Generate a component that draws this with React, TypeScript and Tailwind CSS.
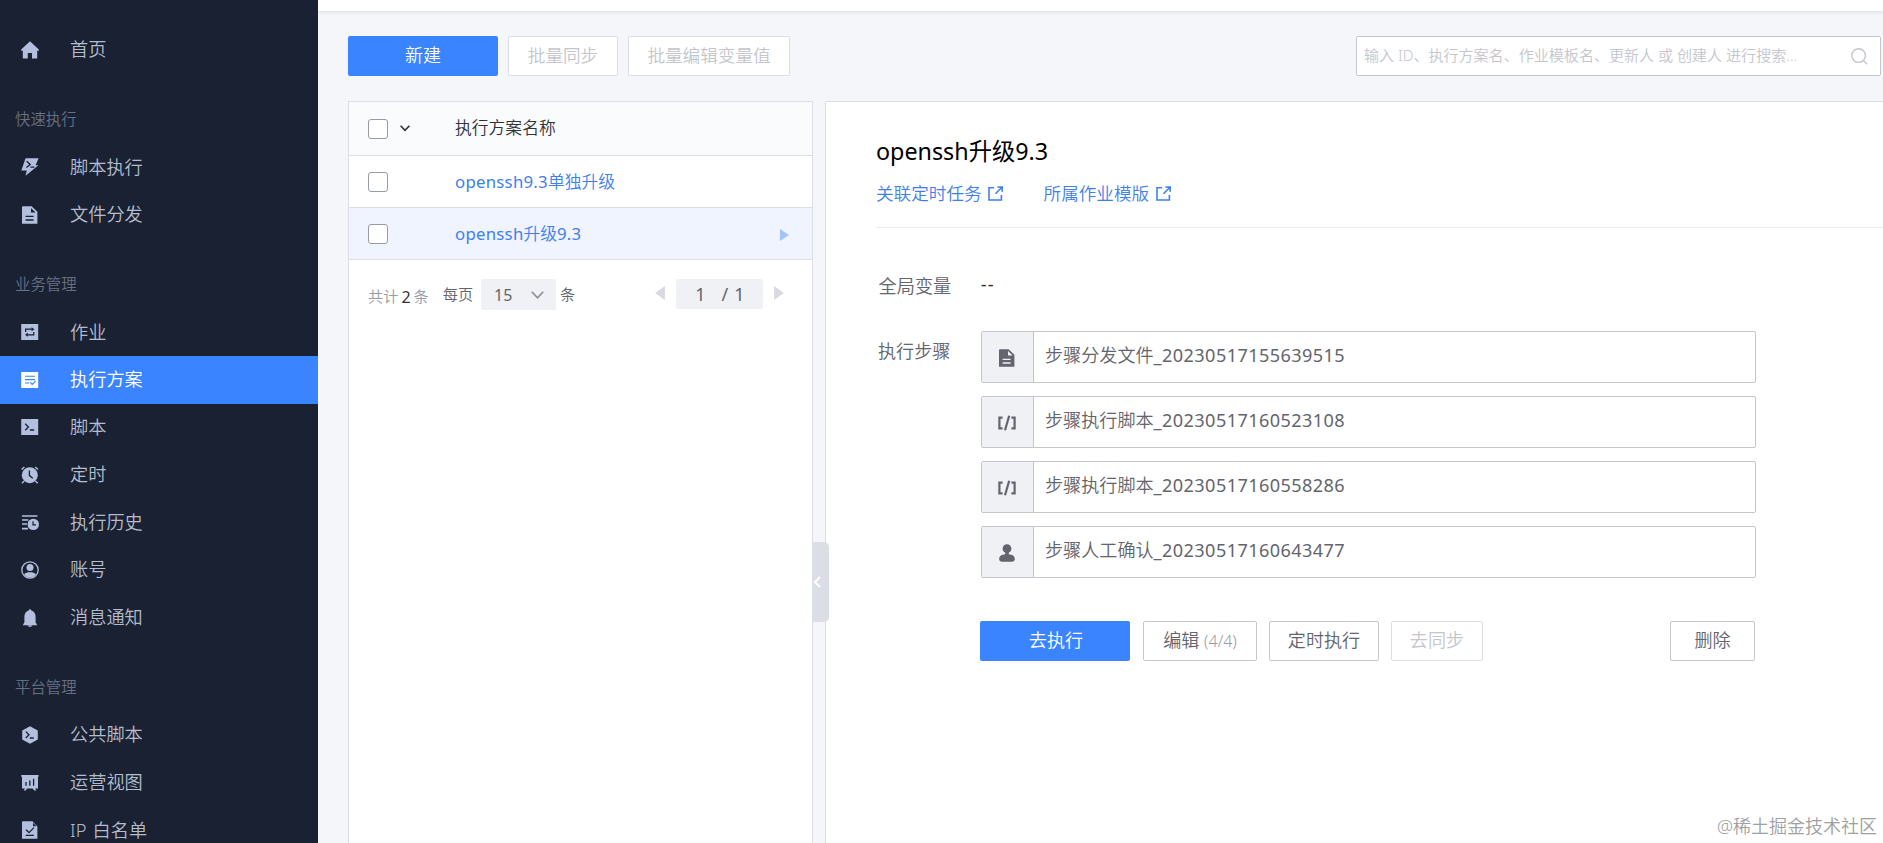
import { ReactNode, useState } from "react";

type TMenuItem = {
  name: string
  icon: ReactNode
}

type TMenuGroup = {
  title: string
  items: TMenuItem[]
}

const BG = "#1a2132"

const HomeIcon = () => (
  <svg className="size-[18px]" viewBox="0 0 18 18" fill="currentColor">
    <path d="M9 0.3 0.2 8.4v1.4h1.6v7.8h5V12h4.2v5.6h5.2V9.8h1.6V8.4z" />
  </svg>
)

const FlashIcon = () => (
  <svg className="size-[18px]" viewBox="0 0 18 18" fill="currentColor">
    <path d="M4.6 0.3H17.6L14.6 7.2H17.4L4.6 17.8 5.8 12.4H0.3z" />
    <path d="M5.6 3.2 9.2 6.4 5.4 9.4M9.4 9.2h4" fill="none" stroke={BG} strokeWidth="1.3" />
  </svg>
)

const FileIcon = ({ hole = BG }: { hole?: string }) => (
  <svg className="size-[18px]" viewBox="0 0 18 18" fill="currentColor">
    <path d="M2 0.3h8.6L16.4 5.8v12H1V1.3a1 1 0 0 1 1-1z" />
    <path d="M10 1.9v4.5h4.6z" fill={hole} />
    <path d="M4.6 10.4h8M4.6 14h8" stroke={hole} strokeWidth="1.3" />
  </svg>
)

const JobIcon = ({ hole = BG }: { hole?: string }) => (
  <svg className="size-[18px]" viewBox="0 0 18 18" fill="currentColor">
    <path d="M0.2 1h17v16h-17z" />
    <path d="M4.6 9V6.2h6.8M12.8 9v2.8H6" fill="none" stroke={hole} strokeWidth="1.2" />
    <path d="M10.6 4.2v4l2.8-2zM6.8 9.8v4l-2.8-2z" fill={hole} />
  </svg>
)

const PlanIcon = () => (
  <svg className="size-[18px]" viewBox="0 0 18 18" fill="currentColor">
    <path d="M0.2 1h17v16h-17z" />
    <path d="M4 5.2h10M4 8.6h10M4 12h4.2M9.2 11.4l2 2 3.4-3.2" fill="none" stroke="#3a84ff" strokeWidth="1.1" />
  </svg>
)

const ScriptIcon = () => (
  <svg className="size-[18px]" viewBox="0 0 18 18" fill="currentColor">
    <path d="M0.2 1h17v16h-17z" />
    <path d="M4.2 5.8 7.4 9 4.2 12.2M8.8 12h4.4" fill="none" stroke={BG} strokeWidth="1.3" />
  </svg>
)

const AlarmIcon = () => (
  <svg className="size-[18px]" viewBox="0 0 18 18" fill="currentColor">
    <circle cx="8.8" cy="9.2" r="8" />
    <path d="M0.6 3.4 3.4 0.9M17 3.4 14.2 0.9M3.2 15 0.9 17.2M14.4 15 16.7 17.2" stroke="currentColor" strokeWidth="1.4" />
    <path d="M8.4 4.6v5l3.4 2.6" fill="none" stroke={BG} strokeWidth="1.3" />
  </svg>
)

const HistoryIcon = () => (
  <svg className="size-[18px]" viewBox="0 0 18 18" fill="currentColor">
    <path d="M1 2h15.4M1 6h6.4M1 10h5M1 14.6h6" stroke="currentColor" strokeWidth="1.6" />
    <circle cx="12.3" cy="10.4" r="5.7" />
    <path d="M12 7.2v3.7h3" fill="none" stroke={BG} strokeWidth="1.2" />
  </svg>
)

const AccountIcon = () => (
  <svg className="size-[18px]" viewBox="0 0 18 18" fill="currentColor">
    <circle cx="9" cy="9" r="8.2" fill="none" stroke="currentColor" strokeWidth="1.3" />
    <circle cx="9" cy="6.6" r="3.5" />
    <path d="M3.2 13.2C5 10.6 13 10.6 14.8 13.2 12.8 17.8 5.2 17.8 3.2 13.2z" />
  </svg>
)

const BellIcon = () => (
  <svg className="size-[18px]" viewBox="0 0 18 18" fill="currentColor">
    <path d="M9 0.2c.8 0 1.2.6 1.2 1.4 2.8.7 4.4 3 4.4 6v5.6l1.6 3H1.8l1.6-3V7.6c0-3 1.6-5.3 4.4-6C7.8.8 8.2.2 9 .2zM6.6 16.6h4.8c-.6 1.8-4.2 1.8-4.8 0z" />
  </svg>
)

const HexIcon = () => (
  <svg className="size-[18px]" viewBox="0 0 18 18" fill="currentColor">
    <path d="M9 0.2 16.8 4.6v8.8L9 17.8 1.2 13.4V4.6z" />
    <path d="M4.8 5.6 8 8.8 4.8 12M8.8 12h4" fill="none" stroke={BG} strokeWidth="1.3" />
  </svg>
)

const ChartIcon = () => (
  <svg className="size-[18px]" viewBox="0 0 18 18" fill="currentColor">
    <path d="M0.2 1h17.4v1.8H17v11.6h-3l1.4 2.2h-2.2L11.6 14.4H6.2l-1.6 2.2H2.6L4 14.4H1V2.8H.2z" />
    <path d="M5 8v3.8M8.8 6.4v5.4M12.6 4.8v7" stroke={BG} strokeWidth="1.3" />
  </svg>
)

const CheckFileIcon = () => (
  <svg className="size-[18px]" viewBox="0 0 18 18" fill="currentColor">
    <path d="M2 .3h9.4L16.4 5.6v12.2H1V1.3a1 1 0 0 1 1-1z" />
    <path d="M12 1.8v3.4h3.4z" fill={BG} />
    <path d="M5 8.8l3 2.8 5-5M4.6 14.4h8.2" fill="none" stroke={BG} strokeWidth="1.3" />
  </svg>
)

const CodeIcon = () => (
  <svg className="size-[18px]" viewBox="0 0 18 18" fill="none" stroke="currentColor" strokeWidth="2.2">
    <path d="M4.6 3.6H1.4v10.8h3.2M13.4 3.6h3.2v10.8h-3.2" />
    <path d="M11.2 1.8 7 16.2" />
  </svg>
)

const UserIcon = () => (
  <svg className="size-[18px]" viewBox="0 0 18 18" fill="currentColor">
    <circle cx="9" cy="4.7" r="4.4" />
    <path d="M7.2 8h3.6v2.2c3.4.2 6 1.8 6 4.8 0 2-1.2 2.8-4.8 2.8H6c-3.6 0-4.8-.8-4.8-2.8 0-3 2.6-4.6 6-4.8z" />
  </svg>
)

const LinkIcon = () => (
  <svg className="mt-[2px] size-[15px]" viewBox="0 0 15 15" fill="none" stroke="currentColor" strokeWidth="1.6">
    <path d="M6 1.7H1v12.3h12.4V9M9.4 1h4.800v4.8M14 1.2 7.4 7.8" />
  </svg>
)

const groups: TMenuGroup[] = [
  {
    title: "快速执行",
    items: [
      { name: "脚本执行", icon: <FlashIcon /> },
      { name: "文件分发", icon: <FileIcon /> },
    ],
  },
  {
    title: "业务管理",
    items: [
      { name: "作业", icon: <JobIcon /> },
      { name: "执行方案", icon: <PlanIcon /> },
      { name: "脚本", icon: <ScriptIcon /> },
      { name: "定时", icon: <AlarmIcon /> },
      { name: "执行历史", icon: <HistoryIcon /> },
      { name: "账号", icon: <AccountIcon /> },
      { name: "消息通知", icon: <BellIcon /> },
    ],
  },
  {
    title: "平台管理",
    items: [
      { name: "公共脚本", icon: <HexIcon /> },
      { name: "运营视图", icon: <ChartIcon /> },
      { name: "IP 白名单", icon: <CheckFileIcon /> },
    ],
  },
]

const steps = [
  { name: "步骤分发文件", id: "_20230517155639515", icon: <FileIcon hole="#f0f1f5" /> },
  { name: "步骤执行脚本", id: "_20230517160523108", icon: <CodeIcon /> },
  { name: "步骤执行脚本", id: "_20230517160558286", icon: <CodeIcon /> },
  { name: "步骤人工确认", id: "_20230517160643477", icon: <UserIcon /> },
]

const MenuItem = ({ item, active, onClick }: { item: TMenuItem, active?: boolean, onClick?: () => void }) => (
  <div
    onClick={onClick}
    className={`flex h-[47.6px] shrink-0 cursor-pointer items-center pl-[21px] text-[18.2px] ${active ? "bg-[#3a84ff] text-white" : "text-[#b3bfdc]"}`}
  >
    {item.icon}
    <span className={`ml-[31px] [word-spacing:1.5px] ${active ? "text-white" : "text-[#b4bdce]"}`}>{item.name}</span>
  </div>
)

const Sidebar = () => {
  const [current, setCurrent] = useState("执行方案")

  return (
    <aside className="flex h-full w-[318px] shrink-0 flex-col overflow-hidden bg-[#1a2132] pt-[26px]">
      <MenuItem item={{ name: "首页", icon: <HomeIcon /> }} />
      {groups.map((group) => (
        <div key={group.title} className="shrink-0">
          <div className="flex h-[69.8px] items-center pt-[22px] pl-[15px] text-[15.4px] text-[#667085]">{group.title}</div>
          {group.items.map((item) => (
            <MenuItem key={item.name} item={item} active={item.name === current} onClick={() => setCurrent(item.name)} />
          ))}
        </div>
      ))}
    </aside>
  )
}

const Checkbox = () => <span className="size-5 shrink-0 rounded-[3px] border border-[#979ba5] bg-white" />

const PlanList = () => (
  <div className="w-[465px] shrink-0 border border-b-0 border-[#dcdee5] bg-white">
    <div className="flex h-[54px] items-center border-b border-[#dcdee5] bg-[#fafbfd] pl-[19px]">
      <Checkbox />
      <svg className="ml-3 h-[7px] w-[10px]" viewBox="0 0 10 7" fill="none" stroke="#313238" strokeWidth="1.6">
        <path d="M0.6 0.8 5 5.4 9.4 0.8" />
      </svg>
      <span className="ml-[45px] pb-[1px] text-[16.8px] text-[#313238]">执行方案名称</span>
    </div>
    <div className="flex h-[52px] items-center border-b border-[#dcdee5] pl-[19px] text-[16.8px] text-[#3f7fee]">
      <Checkbox />
      <span className="ml-[67px]"><span className="font-normal tracking-[0.25px]">openssh9.3</span>单独升级</span>
    </div>
    <div className="flex h-[52px] items-center border-b border-[#dcdee5] bg-[#f0f4fe] pr-[23px] pl-[19px] text-[16.8px] text-[#3f7fee]">
      <Checkbox />
      <span className="ml-[67px]"><span className="font-normal tracking-[0.25px]">openssh</span>升级<span className="font-normal tracking-[0.1px]">9.3</span></span>
      <svg className="mt-[2px] ml-auto h-3 w-[9px]" viewBox="0 0 9 12" fill="#a3c5fd"><path d="M0 0 9 6 0 12z" /></svg>
    </div>
    <div className="flex h-[70px] items-center pb-[1px] pl-[19px] text-[15.2px] text-[#63656e]">
      <span className="pt-1 text-[#979ba5]">共计</span>
      <span className="mx-[3px] pt-1 text-[16px] font-normal text-[#313238]">2</span>
      <span className="pt-1 text-[#979ba5]">条</span>
      <span className="ml-[14px]">每页</span>
      <div className="ml-[8px] flex h-[31px] w-[75px] items-center justify-between rounded-[2px] bg-[#f0f1f5] pr-3 pl-[13px] text-[16px]">
        <span className="font-normal">15</span>
        <svg className="h-2 w-[13px]" viewBox="0 0 13 8" fill="none" stroke="#8a8e99" strokeWidth="1.6">
          <path d="M0.8 0.8 6.5 6.8 12.2 0.8" />
        </svg>
      </div>
      <span className="ml-[4px]">条</span>
      <svg className="mb-[3px] ml-[80px] h-[14px] w-[10px]" viewBox="0 0 9 13" fill="#d8dae0"><path d="M9 0 0 6.5 9 13z" /></svg>
      <div className="mb-[1px] ml-[11px] flex h-[30px] w-[87px] items-center rounded-[2px] bg-[#f0f1f5] pl-[19px] text-[18px] font-normal">
        <span>1</span>
        <span className="ml-[16px]">/</span>
        <span className="ml-[6px]">1</span>
      </div>
      <svg className="mb-[3px] ml-[11px] h-[14px] w-[10px]" viewBox="0 0 9 13" fill="#d8dae0"><path d="M0 0 9 6.5 0 13z" /></svg>
    </div>
  </div>
)

const PlanDetail = () => (
  <div className="min-w-0 flex-1 rounded-tl-[2px] border-t border-l border-[#dcdee5] bg-white pl-[50px]">
    <h1 className="mt-[32px] text-[23.3px] leading-[34px] font-normal text-black">
      openssh升级9.3
    </h1>
    <div className="mt-[11px] flex h-[28px] items-center text-[17.6px] text-[#3f7fee]">
      <a className="flex items-center gap-[6.5px]">关联定时任务 <LinkIcon /></a>
      <a className="ml-[40.5px] flex items-center gap-[6.5px]">所属作业模版 <LinkIcon /></a>
    </div>
    <div className="mt-[20px] border-t border-[#ebecf0]" />

    <div className="mt-[44px] flex h-[30px] items-center pl-[2.500px] text-[18.200px] text-[#63656e]">
      全局变量<span className="mb-[5px] ml-[29.500px] font-normal tracking-[1.200px] text-[#313238]">--</span>
    </div>

    <div className="mt-[29px] flex pl-[2px] text-[18.1px] text-[#63656e]">
      <div className="h-[42px] w-[103px] leading-[41px]">执行步骤</div>
      <div className="flex w-[775px] flex-col gap-[13px]">
        {steps.map((step) => (
          <div key={step.id} className="flex h-[52px] rounded-[2px] border border-[#c4c6cc]">
            <div className="flex w-[52px] shrink-0 items-center justify-center border-r border-[#c4c6cc] bg-[#f0f1f5] pt-[2px] pr-[1px]">{step.icon}</div>
            <div className="flex items-center pb-[2px] pl-[11px]">
              {step.name}<span className="font-normal tracking-[0.42px]">{step.id}</span>
            </div>
          </div>
        ))}
      </div>
    </div>

    <div className="mt-[43px] ml-[104px] flex w-[775px] text-[18.1px] text-[#63656e]">
      <button className="h-10 w-[150px] rounded-[2px] bg-[#3a84ff] pb-[1px] pl-[2px] text-white">去执行</button>
      <button className="ml-[13px] h-10 w-[114px] rounded-[2px] border border-[#c4c6cc] pb-[1px]">
        编辑 <span className="text-[16px] text-[#979ba5]">(4/4)</span>
      </button>
      <button className="ml-[12px] h-10 w-[110px] rounded-[2px] border border-[#c4c6cc] pb-[1px]">定时执行</button>
      <button className="ml-[12px] h-10 w-[92px] rounded-[2px] border border-[#dcdee5] pb-[1px] text-[#c4c6cc]">去同步</button>
      <button className="ml-auto h-10 w-[85px] rounded-[2px] border border-[#c4c6cc] pb-[1px]">删除</button>
    </div>
  </div>
)

const App = () => {
  return (
    <div className="relative flex h-[843px] w-[1883px] overflow-hidden bg-[#f5f6fa] font-['Noto_Sans','Noto_Sans_CJK_SC',sans-serif] font-[350]">
      <Sidebar />
      <main className="flex min-w-0 flex-1 flex-col">
        <div className="h-[11px] shrink-0 bg-white shadow-[0_2px_3px_0_rgba(0,0,0,0.08)]" />
        <div className="mt-[25px] flex h-10 shrink-0 pr-[2px] pl-[30px] text-[17.6px]">
          <button className="w-[150px] rounded-[2px] bg-[#3a84ff] pb-[2px] text-[18px] text-white">新建</button>
          <button className="ml-[10px] w-[110px] rounded-[2px] border border-[#dcdee5] bg-white pb-[2px] text-[#c4c6cc]">批量同步</button>
          <button className="ml-[10px] w-[162px] rounded-[2px] border border-[#dcdee5] bg-white pb-[2px] text-[#c4c6cc]">批量编辑变量值</button>
          <div className="ml-auto flex w-[525px] items-center justify-between rounded-[2px] border border-[#c4c6cc] bg-white pr-[12px] pl-[7px] text-[15.05px] text-[#c4c6cc]">
            <span className="pb-[1px]">输入 ID、执行方案名、作业模板名、更新人 或 创建人 进行搜索...</span>
            <svg className="size-[17px]" viewBox="0 0 17 17" fill="none" stroke="currentColor" strokeWidth="1.4">
              <circle cx="7.6" cy="7.6" r="6.8" />
              <path d="M12.4 12.4 16.2 16.2" />
            </svg>
          </div>
        </div>
        <div className="mt-[25px] flex min-h-0 flex-1 pl-[30px]">
          <PlanList />
          <div className="w-3 shrink-0" />
          <PlanDetail />
        </div>
      </main>
      {/* collapse handle */}
      <div className="absolute top-[542px] left-[812px] flex h-20 w-[17px] items-center rounded-r-[5px] bg-[#dcdee5] pl-[1px]">
        <svg className="h-3 w-2" viewBox="0 0 8 12" fill="none" stroke="#fff" strokeWidth="2"><path d="M7 1 1.8 6 7 11" /></svg>
      </div>
      <div className="absolute right-[6px] bottom-[3px] text-[18px] text-[#a0a0a0]">@稀土掘金技术社区</div>
    </div>
  )
}

export default App
